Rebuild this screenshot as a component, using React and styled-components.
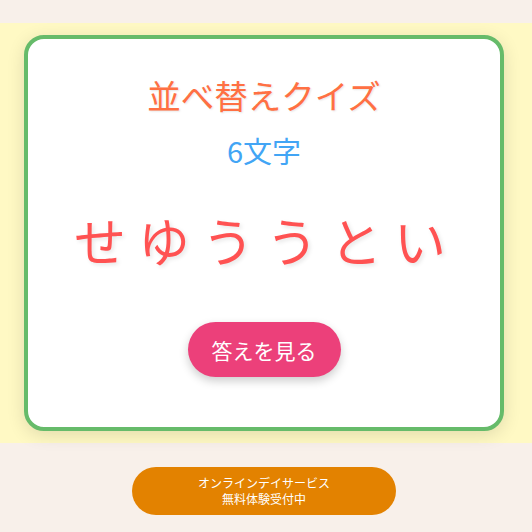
import React from 'react';
import styled, { createGlobalStyle } from 'styled-components';

const GlobalStyle = createGlobalStyle`
  body {
    margin: 0;
    background: #f8f0ea;
    font-family: "Noto Sans CJK JP", "Noto Sans", sans-serif;
  }
`;

const Stage = styled.section`
  margin-top: 23px;
  padding: 12px 28px 12px 24px;
  background: #fff9c4;
`;

const Card = styled.div`
  display: flex;
  flex-direction: column;
  align-items: center;
  height: 388px;
  box-sizing: content-box;
  background: #ffffff;
  border: 4px solid #66bb6a;
  border-radius: 20px;
  box-shadow: 0 4px 18px rgba(0, 0, 0, 0.12);
`;

const Title = styled.h1`
  margin: 31px 0 0;
  font-size: 33.5px;
  line-height: 50px;
  font-weight: 400;
  color: #ff7043;
  text-shadow: 1px 1px 2px rgba(0, 0, 0, 0.1);
`;

const Count = styled.p`
  margin: 9px 0 0;
  font-size: 29px;
  line-height: 42px;
  color: #42a5f5;
`;

const Letters = styled.p`
  margin: 30px 0 0;
  padding-left: 4px;
  font-size: 52px;
  line-height: 78px;
  letter-spacing: 12px;
  color: #ff5252;
  text-shadow: 2px 2px 4px rgba(0, 0, 0, 0.1);
`;

const AnswerButton = styled.button`
  margin-top: 43px;
  padding: 0 24px;
  height: 55px;
  border: none;
  border-radius: 28px;
  background: #ec407a;
  color: #ffffff;
  font-family: inherit;
  font-size: 21px;
  box-shadow: 0 4px 10px rgba(0, 0, 0, 0.2);
  cursor: pointer;
`;

const Promo = styled.a`
  display: flex;
  flex-direction: column;
  align-items: center;
  justify-content: center;
  width: 264px;
  height: 48px;
  margin: 24px 0 0 132px;
  border-radius: 24px;
  background: #e38200;
  color: #ffffff;
  font-size: 12px;
  line-height: 16px;
  text-decoration: none;
`;

const PromoLine = styled.span`
  display: block;
`;

const App = () => (
  <>
    <GlobalStyle />
    <Stage>
      <Card>
        <Title>並べ替えクイズ</Title>
        <Count>6文字</Count>
        <Letters>せゆううとい</Letters>
        <AnswerButton>答えを見る</AnswerButton>
      </Card>
    </Stage>
    <Promo href="#">
      <PromoLine>オンラインデイサービス</PromoLine>
      <PromoLine>無料体験受付中</PromoLine>
    </Promo>
  </>
);

export default App;
